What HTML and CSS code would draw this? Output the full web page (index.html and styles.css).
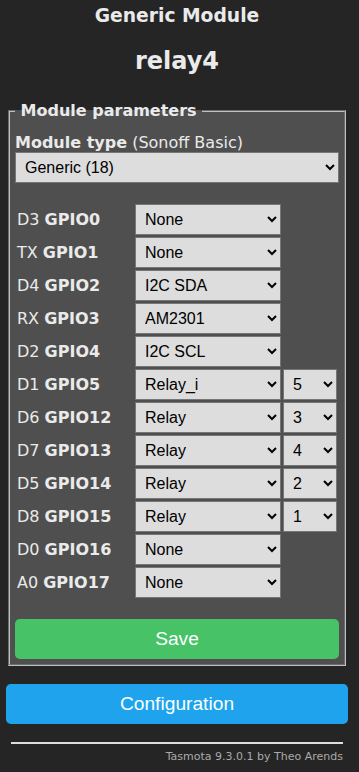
FILE: index.html
```html
<!DOCTYPE html>
<html lang="en">
<head>
  <meta charset="UTF-8">
  <title>Generic Module</title>
  <link rel="stylesheet" href="styles.css">
</head>
<body>

<div class="page">
  <div class="head">
    <h3>Generic Module</h3>
    <h2>relay4</h2>
  </div>

  <fieldset class="params">
    <legend><b>&nbsp;Module parameters&nbsp;</b></legend>
    <div class="mtype"><b>Module type</b> (Sonoff Basic)</div>
    <select class="full"><option>Generic (18)</option></select>

    <div class="gpio">
      <span class="lbl">D3 <b>GPIO0</b></span>
      <select><option>None</option></select><span></span>

      <span class="lbl">TX <b>GPIO1</b></span>
      <select><option>None</option></select><span></span>

      <span class="lbl">D4 <b>GPIO2</b></span>
      <select><option>I2C SDA</option></select><span></span>

      <span class="lbl">RX <b>GPIO3</b></span>
      <select><option>AM2301</option></select><span></span>

      <span class="lbl">D2 <b>GPIO4</b></span>
      <select><option>I2C SCL</option></select><span></span>

      <span class="lbl">D1 <b>GPIO5</b></span>
      <select><option>Relay_i</option></select>
      <select><option>5</option></select>

      <span class="lbl">D6 <b>GPIO12</b></span>
      <select><option>Relay</option></select>
      <select><option>3</option></select>

      <span class="lbl">D7 <b>GPIO13</b></span>
      <select><option>Relay</option></select>
      <select><option>4</option></select>

      <span class="lbl">D5 <b>GPIO14</b></span>
      <select><option>Relay</option></select>
      <select><option>2</option></select>

      <span class="lbl">D8 <b>GPIO15</b></span>
      <select><option>Relay</option></select>
      <select><option>1</option></select>

      <span class="lbl">D0 <b>GPIO16</b></span>
      <select><option>None</option></select><span></span>

      <span class="lbl">A0 <b>GPIO17</b></span>
      <select><option>None</option></select><span></span>
    </div>

    <button class="btn bgrn">Save</button>
  </fieldset>

  <button class="btn">Configuration</button>

  <div class="foot">
    <hr>
    <a href="#">Tasmota 9.3.0.1 by Theo Arends</a>
  </div>
</div>

</body>
</html>
```

FILE: styles.css
```css
body {
  margin: 0;
  font-family: 'DejaVu Sans', Verdana, sans-serif;
  background: #252525;
  color: #eaeaea;
}

.page {
  width: 342px;
  margin-left: 6px;
}

.head {
  padding: 5px;
  text-align: center;
}

.head h3 {
  margin: 0 0 21px;
  font-size: 18.72px;
}

.head h2 {
  margin: 0 0 21px;
  font-size: 24px;
}

.params {
  margin: 0 2px;
  padding: 5px;
  background: #4f4f4f;
  border: 2px groove #c0c0c0;
}

.params legend {
  padding: 0;
}

.mtype {
  margin-top: 8px;
}

select {
  height: 31px;
  padding: 5px;
  font-family: 'Liberation Sans', Arial, sans-serif;
  font-size: 16px;
  background: #dddddd;
  color: #000;
  border: 1px solid #767676;
  border-radius: 0;
}

select.full {
  width: 100%;
}

.gpio {
  display: grid;
  grid-template-columns: 116px 146px 54px;
  gap: 2px;
  padding: 2px;
  margin-top: 19px;
}

.gpio select {
  width: 100%;
}

.lbl {
  align-self: center;
}

.btn {
  display: block;
  width: 100%;
  border: 0;
  border-radius: 0.3rem;
  padding: 1px 6px;
  background: #1fa3ec;
  color: #faffff;
  font-family: 'Liberation Sans', Arial, sans-serif;
  font-size: 1.2rem;
  line-height: 38px;
  cursor: pointer;
  margin-top: 18px;
}

.btn.bgrn {
  background: #47c266;
  margin-top: 19px;
}

.foot {
  padding: 0 5px;
  text-align: right;
  font-size: 11px;
}

.foot hr {
  margin: 18px 0 6px;
  border: 0;
  border-top: 2px solid #dddddd;
}

.foot a {
  color: #aaa;
  text-decoration: none;
}
```
